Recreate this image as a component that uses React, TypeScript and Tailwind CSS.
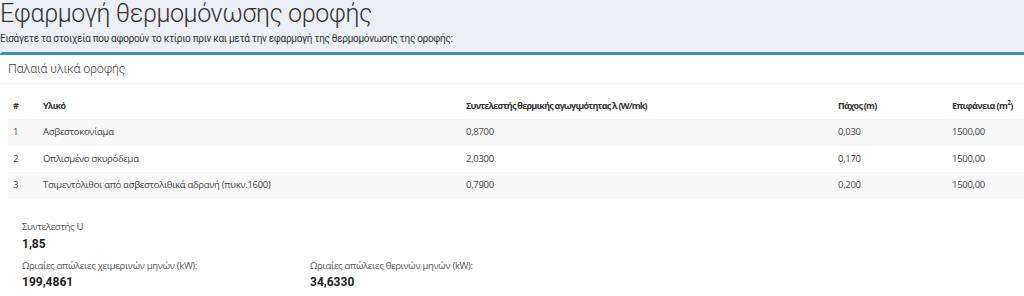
import React from "react";

const rows = [
  ["1", "Ασβεστοκονίαμα", "0,8700", "0,030", "1500,00"],
  ["2", "Οπλισμένο σκυρόδεμα", "2,0300", "0,170", "1500,00"],
  ["3", "Τσιμεντόλιθοι από ασβεστολιθικά αδρανή (πυκν.1600)", "0,7900", "0,200", "1500,00"],
];

const os = { fontFamily: "'Open Sans', sans-serif" };
const rb = { fontFamily: "Roboto, sans-serif" };

export default function App() {
  return (
    <div className="w-[1024px] h-[296px] overflow-hidden bg-[#ecf0f5] text-[#333]" style={{ fontFamily: "Roboto, 'Open Sans', sans-serif" }}>
      <h1 className="text-[25px] font-light leading-[28px] tracking-[-0.4px] text-[#333] m-0 whitespace-nowrap">
        Εφαρμογή θερμομόνωσης οροφής
      </h1>
      <p className="text-[10px] leading-[14px] mt-[4px] tracking-[-0.3px] text-[#333] whitespace-nowrap">
        Εισάγετε τα στοιχεία που αφορούν το κτίριο πριν και μετά την εφαρμογή της θερμομόνωσης της οροφής:
      </p>
      <div className="mt-[6px] bg-white border-t-[3px] border-[#3c8dbc] rounded-tl-[3px] pb-[20px]">
        <div className="h-[29px] flex items-center px-[8px] border-b border-[#f4f4f4]">
          <span className="text-[12.5px] font-light tracking-[-0.2px] text-[#444] pt-[1px]">
            Παλαιά υλικά οροφής
          </span>
        </div>
        <div className="pl-[8px] pt-[8px]">
          <table className="w-full table-fixed border-collapse text-[9.5px] tracking-[-0.3px]" style={os}>
            <colgroup>
              <col className="w-[30px]" />
              <col className="w-[423px]" />
              <col className="w-[372px]" />
              <col className="w-[114px]" />
              <col />
            </colgroup>
            <thead>
              <tr className="h-[27px]">
                {["#", "Υλικό", "Συντελεστής θερμικής αγωγιμότητας λ (W/mk)", "Πάχος (m)"].map((h) => (
                  <th key={h} className="text-left font-bold text-[9px] tracking-[-0.75px] px-[5px] align-middle whitespace-nowrap text-[#333]">{h}</th>
                ))}
                <th className="text-left font-bold text-[9px] tracking-[-0.6px] px-[5px] align-middle whitespace-nowrap text-[#333]">
                  Επιφάνεια (m<sup className="text-[6.5px]">2</sup>)
                </th>
              </tr>
            </thead>
            <tbody>
              {rows.map((r, i) => (
                <tr key={i} className={`h-[26.5px] border-t border-[#f4f4f4] ${i % 2 === 0 ? "bg-[#f9f9f9]" : "bg-white"}`}>
                  {r.map((c, j) => (
                    <td key={j} className="px-[5px] align-middle text-[#444] whitespace-nowrap">{c}</td>
                  ))}
                </tr>
              ))}
            </tbody>
          </table>
        </div>
        <div className="pl-[22px] pt-[21px] text-[9.5px] tracking-[-0.3px]" style={os}>
          <div className="text-[#555] leading-[14px]">Συντελεστής U</div>
          <div className="font-bold text-[12px] leading-[16px] mt-[2px] text-[#222] tracking-normal" style={rb}>1,85</div>
          <div className="flex mt-[7px]">
            <div className="w-[288px]">
              <div className="text-[#555] leading-[14px]">Ωριαίες απώλειες χειμερινών μηνών (kW):</div>
              <div className="font-bold text-[12px] leading-[16px] mt-[1px] text-[#222] tracking-normal" style={rb}>199,4861</div>
            </div>
            <div>
              <div className="text-[#555] leading-[14px]">Ωριαίες απώλειες θερινών μηνών (kW):</div>
              <div className="font-bold text-[12px] leading-[16px] mt-[1px] text-[#222] tracking-normal" style={rb}>34,6330</div>
            </div>
          </div>
        </div>
      </div>
    </div>
  );
}
